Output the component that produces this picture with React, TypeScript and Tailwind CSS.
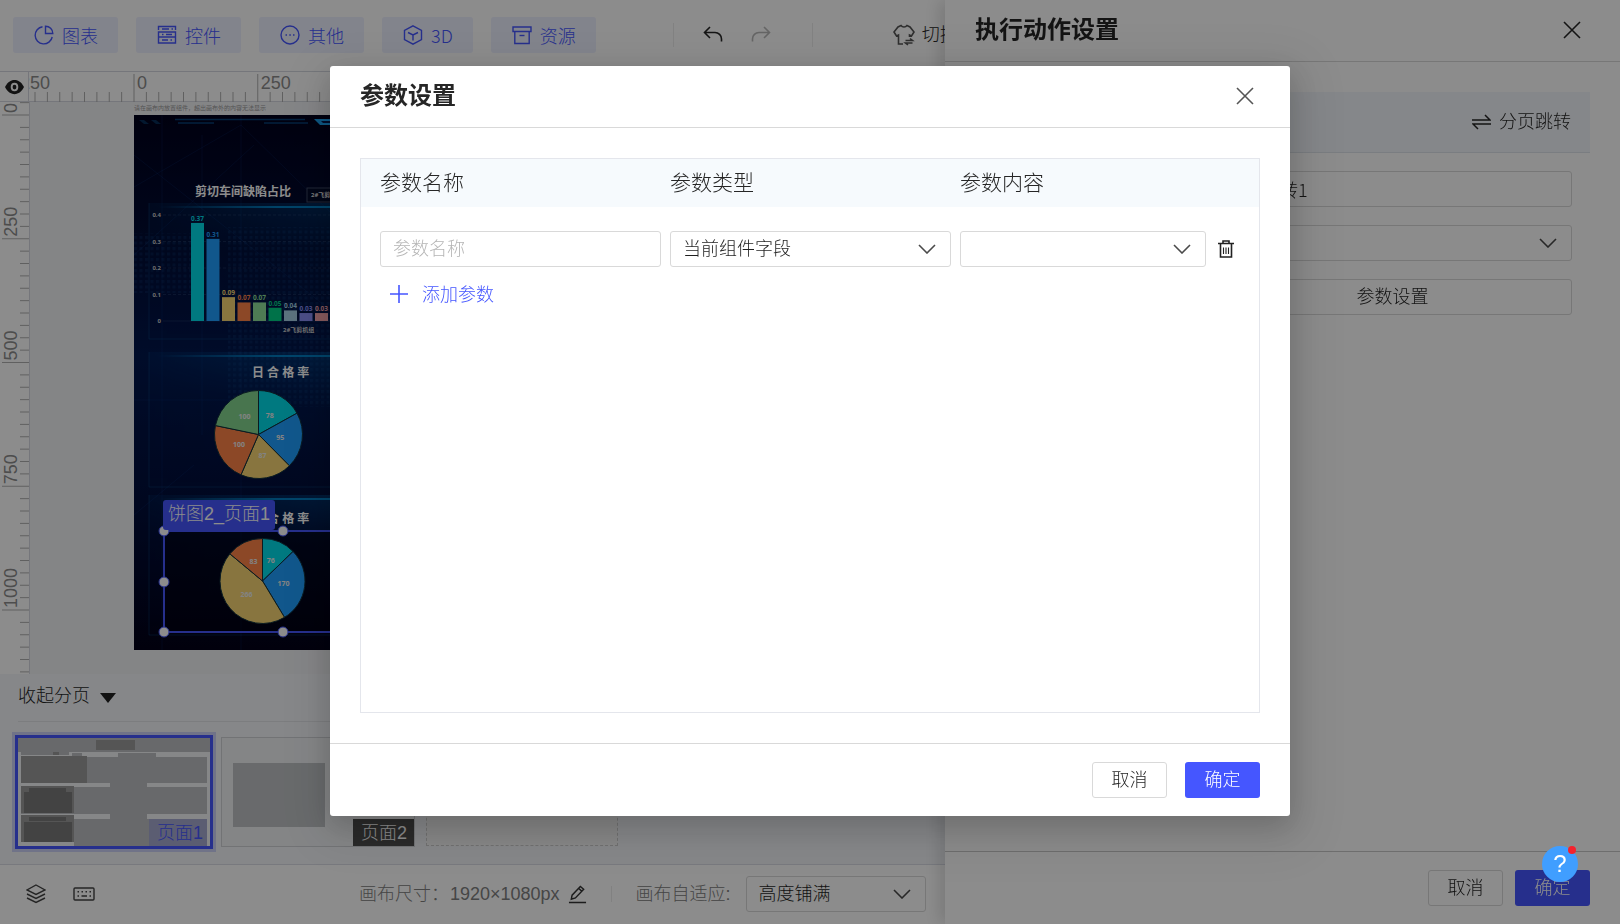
import { useState } from 'react';
import type { ReactNode } from 'react';

const toolButtons = [
  { label: '图表', icon: 'chart' },
  { label: '控件', icon: 'control' },
  { label: '其他', icon: 'other' },
  { label: '3D', icon: 'cube' },
  { label: '资源', icon: 'asset' },
];

const bars = [
  { value: 0.37, color: '#00dcea' },
  { value: 0.31, color: '#1f9fff' },
  { value: 0.09, color: '#f7d673' },
  { value: 0.07, color: '#ff8348' },
  { value: 0.07, color: '#8fe09a' },
  { value: 0.05, color: '#00cf85' },
  { value: 0.04, color: '#a6d0e6' },
  { value: 0.03, color: '#8b8ef5' },
  { value: 0.03, color: '#f7a5ab' },
];

const dayPie = [
  { value: 78, color: '#00dcea' },
  { value: 95, color: '#1f9fff' },
  { value: 87, color: '#f7d673' },
  { value: 100, color: '#ff8348' },
  { value: 100, color: '#84d68f' },
];

const monthPie = [
  { value: 76, color: '#00dcea' },
  { value: 170, color: '#1f9fff' },
  { value: 266, color: '#f7d673' },
  { value: 83, color: '#ff8348' },
];

const toolIcons: Record<string, ReactNode> = {
  chart: (
    <>
      <path d="M8.5 1.8A8.6 8.6 0 1 0 18.2 12" />
      <path d="M11.5 1.2v7.3h7.3a7.3 7.3 0 0 0-7.3-7.3z" />
    </>
  ),
  control: (
    <>
      <path d="M1.5 5V1.5h17V5" />
      <path d="M1.5 7h17v5h-17zM1.5 12h17v6h-17z" />
      <path d="M5 4h7M14.5 4h1.5M5 9.5h1.5M9 9.5h6M5 15h6M13.5 15H15" />
    </>
  ),
  other: (
    <>
      <circle cx="10" cy="10" r="9" />
      <path d="M5.5 10h1.5M9.3 10h1.5M13 10h1.5" />
    </>
  ),
  cube: (
    <>
      <path d="M10 .8l8.500 4.6v9.2l-8.500 4.6-8.500-4.600V5.4z" />
      <path d="M5 7.500l5 2.500 5-2.500M10 10v5.500" />
    </>
  ),
  asset: (
    <>
      <path d="M1 2h18v4.500H1zM2.800 6.500h14.400V18.500H2.800z" />
      <path d="M7.500 10.500h5" />
    </>
  ),
};

const CloseIcon = () => (
  <svg width="18" height="18" viewBox="0 0 18 18" fill="none" stroke="currentColor" strokeWidth="1.6">
    <path d="M1 1l16 16M17 1L1 17" />
  </svg>
);

const ChevronIcon = () => (
  <svg width="18" height="10" viewBox="0 0 18 10" fill="none" stroke="currentColor" strokeWidth="1.6">
    <path d="M1 1l8 8 8-8" />
  </svg>
);

interface SelectBoxProps {
  label: string;
  options: string[];
  className?: string;
}

const SelectBox: React.FC<SelectBoxProps> = ({ label, options, className }) => {
  return (
    <div className={`relative ${className || ''}`}>
      <select
        aria-label={label}
        className="block h-9 w-full appearance-none rounded-[3px] border border-[#d9d9d9] bg-transparent pr-10 pl-3 text-lg leading-6 text-[#1f1f1f] focus:outline-none"
      >
        {options.map((o) => (
          <option key={o}>{o}</option>
        ))}
      </select>
      <span className="pointer-events-none absolute inset-y-0 right-[15px] flex items-center text-[#4a4a4a]">
        <ChevronIcon />
      </span>
    </div>
  );
};

const TopBar = () => {
  return (
    <header className="flex h-[71px] shrink-0 items-center bg-white pb-px pl-[13px]">
      <div className="flex gap-[18px] font-['Noto_Sans_CJK_SC',sans-serif]">
        {toolButtons.map((b) => (
          <button
            key={b.label}
            type="button"
            className="flex h-9 items-center gap-2 rounded-[3px] bg-[#edf0ff] pr-5 pl-[21px] text-lg text-[#4556ff]"
          >
            <svg width="20" height="20" viewBox="0 0 20 20" fill="none" stroke="currentColor" strokeWidth="1.4">
              {toolIcons[b.icon]}
            </svg>
            {b.label}
          </button>
        ))}
      </div>
      <div className="ml-[77px] flex h-6 w-[140px] items-center gap-[28px] border-x border-[#ececec] pl-[29px]">
        <button type="button" aria-label="撤销" className="text-[#262626]">
          <svg width="20" height="18" viewBox="0 0 20 18" fill="none" stroke="currentColor" strokeWidth="1.600">
            <path d="M7 1L1.500 6.500 7 12M1.500 6.500H12a6.500 6.500 0 0 1 6.500 6.500v2.500" />
          </svg>
        </button>
        <button type="button" aria-label="重做" className="text-[#b8b8b8]">
          <svg width="20" height="18" viewBox="0 0 20 18" fill="none" stroke="currentColor" strokeWidth="1.600">
            <path d="M13 1l5.500 5.500L13 12M18.500 6.500H8A6.500 6.500 0 0 0 1.500 13v2.500" />
          </svg>
        </button>
      </div>
      <button type="button" className="ml-20 flex shrink-0 items-center gap-[7px] text-lg text-[#262626]">
        <svg width="22" height="22" viewBox="0 0 22 22" fill="none" stroke="#555" strokeWidth="1.600">
          <path d="M10 20H5.500v-9L3.500 12 1 8l4-5 3-1.500c1.500 2 4.500 2 6 0L17 3l4 5-2.500 4-2-1v2" />
          <path d="M12.500 16.500h7l-2.500-2M19.500 19h-7l2.500 2" />
        </svg>
        切换主题
      </button>
    </header>
  );
};

const TICK = 12.375;

const HorizontalRuler = () => {
  const ticks = [];
  for (let i = -8; i < 70; i++) {
    ticks.push(i);
  }
  return (
    <svg className="h-[30px] min-w-0 flex-1" fontFamily="Liberation Sans, Arial, sans-serif" fontSize="18">
      {ticks.map((i) => {
        const x = 105 + i * TICK;
        return (
          <g key={i}>
            <path d={`M${x} ${i % 10 === 0 ? 2 : 20}V30`} stroke="#b0b0b0" />
            {i % 10 === 0 && (
              <text x={x + 3} y="17" fill="#8c8c8c">
                {i * 25}
              </text>
            )}
          </g>
        );
      })}
      <text x="-15" y="17" fill="#8c8c8c">-250</text>
    </svg>
  );
};

const VerticalRuler = () => {
  const ticks = [];
  for (let i = -1; i < 46; i++) {
    ticks.push(i);
  }
  return (
    <svg
      className="h-full w-[30px] shrink-0 border-r border-[#d5d8e0] bg-white"
      fontFamily="Liberation Sans, Arial, sans-serif"
      fontSize="18"
    >
      {ticks.map((i) => {
        const y = 13 + i * TICK;
        return (
          <g key={i}>
            <path d={`M${i % 10 === 0 ? 2 : 20} ${y}H30`} stroke="#b0b0b0" />
            {i % 10 === 0 && (
              <text transform={`translate(17 ${y - 2}) rotate(-90)`} fill="#8c8c8c">
                {i * 25}
              </text>
            )}
          </g>
        );
      })}
    </svg>
  );
};

interface PieProps {
  data: { value: number; color: string }[];
  cx: number;
  cy: number;
  r: number;
}

const Pie: React.FC<PieProps> = ({ data, cx, cy, r }) => {
  const total = data.reduce((sum, d) => sum + d.value, 0);
  let start = 0;
  return (
    <g>
      {data.map((d, i) => {
        const end = start + (d.value / total) * Math.PI * 2;
        const mid = (start + end) / 2;
        const large = end - start > Math.PI ? 1 : 0;
        const path = `M${cx} ${cy}L${cx + r * Math.sin(start)} ${cy - r * Math.cos(start)}A${r} ${r} 0 ${large} 1 ${cx + r * Math.sin(end)} ${cy - r * Math.cos(end)}Z`;
        start = end;
        return (
          <g key={i}>
            <path d={path} fill={d.color} stroke="#12323c" />
            <text
              x={cx + r * 0.5 * Math.sin(mid)}
              y={cy - r * 0.5 * Math.cos(mid) + 2}
              textAnchor="middle"
              fontSize="7"
              fontWeight="bold"
              fill="#eee"
            >
              {d.value}
            </text>
          </g>
        );
      })}
    </g>
  );
};

const panels = [
  { y: 88, height: 136 },
  { y: 237, height: 135 },
  { y: 380, height: 140 },
];

const Dashboard = () => {
  return (
    <svg
      className="block"
      width="950"
      height="535"
      viewBox="0 0 950 535"
      fontFamily="Noto Sans, Noto Sans CJK SC, sans-serif"
    >
      <defs>
        <linearGradient id="bg" x1="0" y1="0" x2="0" y2="1">
          <stop offset="0" stopColor="#00011c" />
          <stop offset="0.2" stopColor="#000a30" />
          <stop offset="0.45" stopColor="#00164c" />
          <stop offset="0.75" stopColor="#000d38" />
          <stop offset="1" stopColor="#020118" />
        </linearGradient>
        <linearGradient id="glow" x1="0" y1="0" x2="0" y2="1">
          <stop offset="0" stopColor="#0068b0" stopOpacity="0.5" />
          <stop offset="0.35" stopColor="#00529a" stopOpacity="0.1" />
          <stop offset="1" stopColor="#003a80" stopOpacity="0" />
        </linearGradient>
        <linearGradient id="fade" x1="0" y1="0" x2="1" y2="0">
          <stop offset="0" stopColor="#fff" stopOpacity="0.15" />
          <stop offset="0.3" stopColor="#fff" stopOpacity="1" />
        </linearGradient>
        <mask id="side">
          <rect width="950" height="535" fill="url(#fade)" />
        </mask>
        <linearGradient id="beam" x1="0" y1="0" x2="1" y2="0">
          <stop offset="0" stopColor="#0090d8" stopOpacity="0" />
          <stop offset="0.3" stopColor="#0090d8" stopOpacity="0.8" />
          <stop offset="1" stopColor="#0090d8" stopOpacity="0.9" />
        </linearGradient>
        <pattern id="dots" width="5.500" height="5.500" patternUnits="userSpaceOnUse">
          <rect width="3" height="3" fill="#1c4f8f" opacity="0.22" />
        </pattern>
      </defs>
      <rect width="950" height="535" fill="url(#bg)" />
      <path
        d="M28 0v535M68 20v300M107 0v535M0 72L107 10M0 40L190 190M107 10L250 150M0 140L120 30M0 285h200M0 400L60 350"
        stroke="#174a9a"
        strokeOpacity="0.18"
        fill="none"
      />
      <rect x="94" y="112" width="300" height="180" fill="url(#dots)" />
      <rect x="0" y="118" width="60" height="60" fill="url(#dots)" />
      <path d="M41 4.500h130M130 8h44M44 8h36" stroke="#0d78c8" strokeOpacity="0.5" strokeWidth="1.500" />
      <path d="M5 5h5l5 4h-5zM17 5h5l5 4h-5z" fill="#0b5590" opacity="0.5" />
      <path d="M180 4h30v6h-24z" fill="#18a0f0" />
      <path d="M187 6h23v2h-21z" fill="#00164c" />

      {panels.map((p) => (
        <g key={p.y}>
          <rect x="15" y={p.y} width="400" height={p.height} fill="url(#glow)" mask="url(#side)" />
          <rect x="25" y={p.y + 3} width="390" height="2" fill="url(#beam)" />
          <path d={`M15 ${p.y}v${p.height}h400`} stroke="#0f6fae" strokeOpacity="0.25" fill="none" />
        </g>
      ))}

      <text x="61" y="81" fontSize="12" fontWeight="bold" fill="#fff">剪切车间缺陷占比</text>
      <rect x="173" y="73" width="60" height="14" fill="#020a28" stroke="#3c4663" />
      <text x="177" y="82" fontSize="6" fontWeight="bold" fill="#ddd">2#飞剪机组</text>

      {[0.4, 0.3, 0.2, 0.1, 0].map((v) => (
        <g key={v}>
          <path d={`M29 ${206 - v * 265}h300`} stroke="#6b86b0" strokeOpacity="0.2" strokeDasharray={v ? '3 2' : undefined} />
          <text x="27" y={208 - v * 265} textAnchor="end" fontSize="6" fontWeight="bold" fill="#ccc">
            {v}
          </text>
        </g>
      ))}
      {bars.map((b, i) => {
        const h = b.value * 265;
        const x = 57 + i * 15.5;
        return (
          <g key={i}>
            <rect x={x} y={206 - h} width="13" height={h} fill={b.color} />
            <text x={x + 6.5} y={204 - h} textAnchor="middle" fontSize="6.500" fontWeight="bold" fill={b.color}>
              {b.value}
            </text>
          </g>
        );
      })}
      <text x="149" y="217" fontSize="6" fontWeight="bold" fill="#ccc">2#飞剪机组</text>

      <text x="118" y="262" fontSize="12" fontWeight="bold" fill="#fff">日 合 格 率</text>
      <Pie data={dayPie} cx={124.5} cy={319.5} r={44} />
      <text x="118" y="408" fontSize="12" fontWeight="bold" fill="#fff">月 合 格 率</text>
      <rect x="30" y="417" width="237" height="100" fill="#00000c" opacity="0.5" />
      <Pie data={monthPie} cx={128.5} cy={466} r={42.5} />
    </svg>
  );
};

const handles = [
  'left-0 top-0',
  'left-1/2 top-0',
  'left-full top-0',
  'left-0 top-1/2',
  'left-full top-1/2',
  'left-0 top-full',
  'left-1/2 top-full',
  'left-full top-full',
];

const CanvasArea = () => {
  return (
    <div className="flex min-h-0 flex-1 flex-col border-t border-[#d5d8e0]">
      <div className="flex h-[30px] shrink-0 border-b border-[#d5d8e0] bg-white">
        <button type="button" aria-label="显示标尺" className="flex w-[29px] items-center justify-end border-r border-[#d5d8e0] pr-1">
          <svg width="19" height="16" viewBox="0 0 20 16">
            <path d="M0 8C3 2 7 .5 10 .5S17 2 20 8c-3 6-7 7.500-10 7.500S3 14 0 8z" fill="#222" />
            <ellipse cx="10" cy="8" rx="3" ry="3.500" fill="none" stroke="#fff" strokeWidth="2" />
          </svg>
        </button>
        <HorizontalRuler />
      </div>
      <div className="flex min-h-0 flex-1 bg-[#f1f2f5]">
        <VerticalRuler />
        <div className="min-w-0 flex-1 overflow-hidden pl-[104px]">
          <p className="h-[13px] text-[6px] leading-3 font-normal text-[#999]">请在画布内放置组件，超出画布外的内容无法显示</p>
          <div className="relative">
            <Dashboard />
            <div className="absolute top-[416px] left-[30px] h-[101px] w-[238px] outline-2 -outline-offset-1 outline-[#4556ff]">
              {handles.map((h) => (
                <span
                  key={h}
                  className={`absolute size-[11px] -translate-1/2 rounded-full border border-[#4556ff] bg-white ${h}`}
                />
              ))}
              <span className="absolute -top-[31px] -left-px flex h-[30px] items-center rounded-[3px] bg-[#4556ff] px-[5px] pb-0.5 text-lg whitespace-nowrap text-white">
                饼图2_页面1
              </span>
            </div>
          </div>
        </div>
      </div>
    </div>
  );
};

const PageThumb = () => (
  <svg className="block" width="192" height="108" viewBox="0 0 192 108" shapeRendering="crispEdges">
    <rect width="192" height="108" fill="#f5f6f8" />
    <path
      d="M0 0h192v14H0zM3 13h48v4H3zM54 15h10v3H54zM100 15h38v5h-38zM3 19h186v26H3zM92 45h37v4H92zM3 49h186v27H3zM92 76h37v5H92zM56 81h133v27H56z"
      fill="#bdc0c3"
    />
    <path d="M78 2h39v10H78zM35 14h6v3h-6zM3 18h66v27H3zM3 48h53v27H3zM3 77h53v27H3z" fill="#9b9b9b" />
    <path d="M11 50h37v4h6v21H6V54h5zM11 79h37v4H11zM6 84h48v20H6z" fill="#7b7b7b" />
  </svg>
);

const PageStrip = () => {
  return (
    <div className="h-[190px] shrink-0 bg-[#f4f6fa] pt-1">
      <div className="ml-[18px] flex h-11 items-center border-b border-[#e2e4e8] pb-2">
        <button type="button" className="flex items-center gap-[10px] text-lg text-[#262626]">
          收起分页
          <span className="mt-1 border-x-8 border-t-10 border-x-transparent border-t-[#222]" />
        </button>
      </div>
      <div className="flex gap-[11px] pt-[15px] pl-[15px]">
        <button
          type="button"
          className="relative -mt-0.5 -mb-px h-[114px] border-3 border-[#4556ff] shadow-[0_0_0_3px_#cdd2f8]"
        >
          <PageThumb />
          <span className="absolute right-[3px] bottom-0 flex h-[27px] items-center bg-[#a6a9cf] pr-1 pl-2 text-lg text-[#4556ff]">
            页面1
          </span>
        </button>
        <button
          type="button"
          className="relative -ml-[3px] flex h-[110px] w-[194px] items-start border border-[#d0d2d6] bg-[#f1f3f5] pt-[25px] pl-[11px]"
        >
          <span className="block h-16 w-[92px] bg-[#bfc2c5]" />
          <span className="absolute right-0 bottom-0 flex h-[27px] items-center bg-[#4c4c4c] pr-[7px] pl-2 text-lg text-white">
            页面2
          </span>
        </button>
        <button type="button" aria-label="新增页面" className="h-[109px] w-[192px] border border-dashed border-[#ccc] bg-[#f5f5f5]" />
      </div>
    </div>
  );
};

const StatusBar = () => {
  return (
    <footer className="flex h-[60px] shrink-0 items-center border-t border-[#dadde6] bg-white pb-px pl-[26px] text-lg text-[#808080]">
      <button type="button" aria-label="图层">
        <svg width="20" height="20" viewBox="0 0 20 20" fill="none" stroke="#444" strokeWidth="1.400">
          <path d="M10 1l9 5-9 4.500L1 6zM1 10l9 4.500 9-4.500M1 14l9 4.500 9-4.500" />
        </svg>
      </button>
      <button type="button" aria-label="快捷键" className="ml-[27px]">
        <svg width="22" height="14" viewBox="0 0 22 14" fill="none" stroke="#444" strokeWidth="1.400">
          <rect x="1" y="1" width="20" height="12" rx="1" />
          <path d="M4.500 4.800h1.500M8.500 4.800H10M12.500 4.800H14M16.500 4.800H18M4.500 9h1.500M8.500 9h5.500M16.500 9H18" />
        </svg>
      </button>
      <span className="ml-[264px] w-[91px]">画布尺寸：</span>
      <span>1920×1080px</span>
      <button type="button" aria-label="修改画布尺寸" className="ml-2">
        <svg width="19" height="20" viewBox="0 0 20 20" fill="none" stroke="#333" strokeWidth="1.500">
          <path d="M1 19h18M3.500 15.500l.8-4.300L13 2l3.500 3-8.700 9.200zM11 4l3.500 3" />
        </svg>
      </button>
      <span className="mx-6 h-4 w-px bg-[#ececec]" />
      <span className="w-[110px]">画布自适应:</span>
      <SelectBox label="画布自适应" options={['高度铺满', '宽度铺满']} className="w-[180px]" />
    </footer>
  );
};

const ActionDrawer = () => {
  const [name, setName] = useState('分页跳转1');

  return (
    <aside className="fixed inset-y-0 right-0 flex w-[675px] flex-col bg-white text-lg text-[#262626] shadow-[-6px_0_16px_rgba(0,0,0,0.14)]">
      <div className="flex h-[62px] shrink-0 items-center justify-between border-b border-[#d9d9d9] pr-[39px] pb-0.5 pl-[30px]">
        <h2 className="text-2xl font-bold">执行动作设置</h2>
        <button type="button" aria-label="关闭动作设置">
          <CloseIcon />
        </button>
      </div>
      <div className="flex-1 p-[30px]">
        <div className="flex h-[61px] items-center justify-end gap-2 border-b border-[#dfe3ec] bg-[#f3f6fb] px-[19px]">
          <svg width="19" height="16" viewBox="0 0 19 16" fill="none" stroke="currentColor" strokeWidth="1.500">
            <path d="M0 6h18l-5-5M19 10H1l5 5" />
          </svg>
          分页跳转
        </div>
        <div className="mt-[18px] ml-[238px] flex flex-col gap-[18px] pr-[18px]">
          <input
            aria-label="动作名称"
            value={name}
            onChange={(e) => setName(e.target.value)}
            className="h-9 rounded-[3px] border border-[#d9d9d9] px-3 font-['Noto_Sans_CJK_SC',sans-serif] focus:outline-none"
          />
          <SelectBox label="跳转页面" options={['', '页面2']} />
          <button type="button" className="h-9 rounded-[3px] border border-[#d9d9d9]">
            参数设置
          </button>
        </div>
      </div>
      <div className="flex h-[73px] shrink-0 items-center justify-end gap-3 border-t border-[#c8c8c8] pr-[30px]">
        <button type="button" className="h-9 w-[75px] rounded-[3px] border border-[#d9d9d9]">取消</button>
        <button type="button" className="h-9 w-[75px] rounded-[3px] bg-[#4556ff] text-white">确定</button>
      </div>
    </aside>
  );
};

const ParamModal = () => {
  const [param, setParam] = useState('');

  return (
    <div
      role="dialog"
      aria-label="参数设置"
      className="flex h-[750px] w-[960px] flex-col rounded-[3px] bg-white text-lg text-[#262626] shadow-[0_9px_28px_rgba(0,0,0,0.16),0_12px_48px_16px_rgba(0,0,0,0.08)]"
    >
      <div className="flex h-[62px] shrink-0 items-center justify-between border-b border-[#d9d9d9] pr-9 pb-px pl-[30px]">
        <h2 className="text-2xl font-bold">参数设置</h2>
        <button type="button" aria-label="关闭" className="text-[#555]">
          <CloseIcon />
        </button>
      </div>
      <div className="min-h-0 flex-1 p-[30px]">
        <div className="h-full border border-[#e4e6ec]">
          <table className="w-full table-fixed text-left">
            <thead className="bg-[#f6fafd]">
              <tr className="h-12 text-[21px]">
                <th className="w-[309px] pl-[19px] font-light">参数名称</th>
                <th className="w-[290px] font-light">参数类型</th>
                <th className="font-light">参数内容</th>
              </tr>
            </thead>
            <tbody>
              <tr>
                <td className="pt-6 pr-[9px] pl-[19px]">
                  <input
                    aria-label="参数名称"
                    placeholder="参数名称"
                    value={param}
                    onChange={(e) => setParam(e.target.value)}
                    className="block h-9 w-full rounded-[3px] border border-[#d9d9d9] px-3 placeholder:text-[#b5b5b5] focus:outline-none"
                  />
                </td>
                <td className="pt-6 pr-[9px]">
                  <SelectBox label="参数类型" options={['当前组件字段', '固定值']} />
                </td>
                <td className="pt-6 pr-[25px]">
                  <div className="flex items-center gap-3">
                    <SelectBox label="参数内容" options={['']} className="flex-1" />
                    <button type="button" aria-label="删除参数" className="text-[#222]">
                      <svg width="16" height="18" viewBox="0 0 16 18" fill="none" stroke="currentColor" strokeWidth="1.600">
                        <path d="M0 3.500h16M5 3V1h6v2M2.500 4v13h11V4" />
                        <path d="M5.500 7.500v6.500M8 7.500v6.500M10.500 7.500v6.500" strokeWidth="1.100" />
                      </svg>
                    </button>
                  </div>
                </td>
              </tr>
            </tbody>
          </table>
          <button type="button" className="mt-[14px] ml-[29px] flex items-center gap-[14px] text-[#4556ff]">
            <svg className="mb-0.5" width="18" height="18" viewBox="0 0 18 18" fill="none" stroke="currentColor" strokeWidth="1.600">
              <path d="M9 0v18M0 9h18" />
            </svg>
            添加参数
          </button>
        </div>
      </div>
      <div className="flex h-[73px] shrink-0 items-center justify-end gap-[18px] border-t border-[#d9d9d9] pr-[30px]">
        <button type="button" className="h-9 w-[75px] rounded-[3px] border border-[#d9d9d9]">取消</button>
        <button type="button" className="h-9 w-[75px] rounded-[3px] bg-[#4556ff] text-white">确定</button>
      </div>
    </div>
  );
};

const App = () => {
  return (
    <div className="h-screen overflow-hidden font-['Liberation_Sans','Noto_Sans_CJK_SC',sans-serif] font-light">
      <main className="flex h-full flex-col">
        <TopBar />
        <CanvasArea />
        <PageStrip />
        <StatusBar />
      </main>
      <ActionDrawer />
      <div className="fixed inset-0 flex items-start justify-center bg-black/45 pt-[66px]">
        <ParamModal />
      </div>
      <button
        type="button"
        aria-label="帮助"
        className="fixed right-[42px] bottom-[42px] flex size-9 items-center justify-center rounded-full bg-[#409eff] text-2xl font-normal text-white"
      >
        ?
        <span className="absolute top-0 right-[2px] size-2 rounded-full bg-[#f5222d]" />
      </button>
    </div>
  );
};

export default App;
